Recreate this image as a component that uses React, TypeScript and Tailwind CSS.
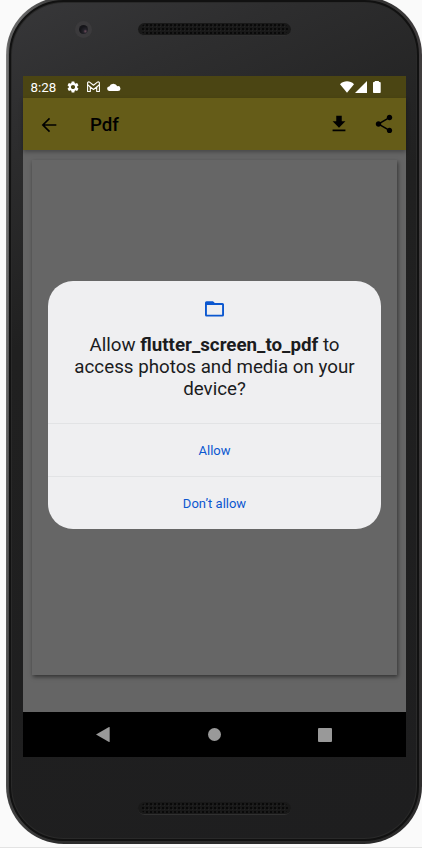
import React from "react";

function Speaker() {
  return (
    <div className="mx-auto flex h-[13px] w-[153px] items-center justify-center rounded-full border-b border-[#303030] bg-[#191919]">
      <svg width="147" height="10" viewBox="0 0 147 10">
        <defs>
          <pattern id="mesh" width="4" height="4" patternUnits="userSpaceOnUse">
            <rect width="2" height="2" x="1" y="0" fill="#090909" />
            <rect width="1" height="1" x="3" y="2" fill="#232323" />
          </pattern>
        </defs>
        <rect width="147" height="10" rx="5" fill="url(#mesh)" />
      </svg>
    </div>
  );
}

function StatusBar() {
  return (
    <div className="flex h-[22px] shrink-0 items-center bg-[#4b4513] pl-[7.500px] pr-[25px] text-white">
      <span className="w-[36px] pt-px text-[13.300px] leading-[22px]">8:28</span>
      <svg className="-ml-px h-[14px] w-[14px]" viewBox="0 0 24 24" fill="currentColor">
        <path d="M19.14 12.94c.04-.3.06-.61.06-.94 0-.32-.02-.64-.07-.94l2.03-1.58a.49.49 0 0 0 .12-.61l-1.92-3.32a.488.488 0 0 0-.59-.22l-2.39.96c-.5-.38-1.03-.7-1.62-.94l-.36-2.54a.484.484 0 0 0-.48-.41h-3.84c-.24 0-.43.17-.47.41l-.36 2.54c-.59.24-1.13.57-1.62.94l-2.39-.96c-.22-.08-.47 0-.59.22L2.74 8.87c-.12.21-.08.47.12.61l2.03 1.58c-.05.3-.09.63-.09.94s.02.64.07.94l-2.03 1.58a.49.49 0 0 0-.12.61l1.92 3.32c.12.22.37.29.59.22l2.39-.96c.5.38 1.03.7 1.62.94l.36 2.54c.05.24.24.41.48.41h3.84c.24 0 .44-.17.47-.41l.36-2.54c.59-.24 1.13-.56 1.62-.94l2.39.96c.22.08.47 0 .59-.22l1.92-3.32c.12-.22.07-.47-.12-.61l-2.01-1.58zM12 15.6c-1.98 0-3.6-1.62-3.6-3.6s1.62-3.6 3.6-3.6 3.6 1.62 3.6 3.6-1.62 3.6-3.6 3.6z" />
      </svg>
      <svg
        className="ml-[7.500px] h-[12px] w-[13px]"
        viewBox="0 0 13 12"
        fill="none"
        stroke="currentColor"
        strokeWidth="1.1"
        strokeLinejoin="round"
      >
        <path d="M.6 2v8.500h2.700V6L6.500 8.500 9.700 6v4.500h2.700V2c0-1-1.200-1.500-2-.9L6.500 4.200 2.600 1.100C1.800.5.6 1 .6 2z" />
        <path d="M.6 3.800 3.300 6M12.400 3.800 9.700 6" />
      </svg>
      <svg className="ml-[7px] h-[8px] w-[14px]" viewBox="0 0 14 8" fill="currentColor">
        <path d="M2.600 8a2.300 2.300 0 0 1-.3-4.600 4.300 4.300 0 0 1 8-.1A2.400 2.400 0 1 1 11 8z" />
      </svg>
      <span className="flex-1" />
      <svg className="h-[12px] w-[14px]" viewBox="0 0 14 12" fill="currentColor">
        <path d="M7 11.800 0 3.200C4-.6 10-.6 14 3.200z" />
      </svg>
      <svg className="ml-px h-[12px] w-[12px]" viewBox="0 0 12 12" fill="currentColor">
        <path d="M0 12 12 0v12z" />
      </svg>
      <svg className="ml-[6px] h-[12px] w-[8px]" viewBox="0 0 8 12" fill="currentColor">
        <path d="M.7 1h1V0h4.200v1h1q.8 0 .8.800v9.400q0 .8-.8.800H.7q-.7 0-.7-.8V1.800Q0 1 .7 1z" />
      </svg>
    </div>
  );
}

function AppBar() {
  return (
    <header className="relative flex h-[52px] shrink-0 items-center bg-[#655c18] pl-[15px] pr-[11px] text-black shadow-[0_2px_4px_rgba(0,0,0,0.3)]">
      <svg className="mt-px h-[22px] w-[22px]" viewBox="0 0 24 24" fill="currentColor">
        <path d="M20 11.200H7.400l5.800-5.800L12 4.200l-8 7.800 8 7.800 1.200-1.200-5.800-5.800H20v-1.600z" />
      </svg>
      <h1 className="ml-[30px] flex-1 pt-[2px] text-[18.700px] font-medium leading-[22px]">Pdf</h1>
      <svg className="h-[22px] w-[22px]" viewBox="0 0 24 24" fill="currentColor">
        <path d="M19 9h-4V3H9v6H5l7 7 7-7zM5 18v2h14v-2H5z" />
      </svg>
      <svg className="ml-[23px] h-[22px] w-[22px]" viewBox="0 0 24 24" fill="currentColor">
        <path d="M18 16.080c-.76 0-1.440.3-1.960.77L8.910 12.700c.05-.23.09-.46.09-.7s-.04-.47-.09-.7l7.050-4.110c.54.5 1.250.81 2.040.81 1.660 0 3-1.340 3-3s-1.340-3-3-3-3 1.340-3 3c0 .24.04.47.09.7L8.040 9.810C7.500 9.310 6.790 9 6 9c-1.660 0-3 1.340-3 3s1.340 3 3 3c.79 0 1.500-.31 2.040-.81l7.120 4.160c-.05.21-.08.43-.08.65 0 1.610 1.310 2.920 2.920 2.920s2.920-1.310 2.920-2.920-1.310-2.920-2.920-2.920z" />
      </svg>
    </header>
  );
}

function PermissionDialog() {
  return (
    <section
      role="dialog"
      className="absolute left-[25px] top-[205px] flex h-[248px] w-[333px] flex-col overflow-hidden rounded-[25px] bg-[#efeff1] text-center"
    >
      <div className="flex h-[142px] flex-col items-center">
        <svg className="mt-[20px] h-[16px] w-[19px] shrink-0 text-[#0b57d0]" viewBox="0 0 19 16" fill="currentColor">
          <path
            fillRule="evenodd"
            d="M1.500.3H8L9.800 2h7.700Q19 2 19 3.500v10.600q0 1.500-1.500 1.500h-16Q0 15.600 0 14.100V1.800Q0 .3 1.500.3zM1.900 3.900v9.900h15.200V3.900z"
          />
        </svg>
        <p className="mt-[17px] whitespace-nowrap text-[18.750px] leading-[22px] text-[#1b1c1e]">
          Allow <b className="font-bold">flutter_screen_to_pdf</b> to
          <br />
          access photos and media on your
          <br />
          device?
        </p>
      </div>
      <button className="h-[53px] border-t border-[#e2e3e5] pt-[2px] text-[13px] text-[#0b57d0]">Allow</button>
      <button className="h-[53px] border-t border-[#e2e3e5] pt-[2px] text-[13px] text-[#0b57d0]">Don’t allow</button>
    </section>
  );
}

function NavigationBar() {
  return (
    <nav className="flex h-[45px] shrink-0 items-center bg-black pl-[73px] pr-[74px] text-[#999999]">
      <svg className="h-[16px] w-[14px]" viewBox="0 0 14 16" fill="currentColor">
        <path d="M0 7.500 13 0q.7 0 .7.600v13.800q0 .6-.7.600z" />
      </svg>
      <span className="ml-[98px] h-[13px] w-[13px] rounded-full bg-[#999999]" />
      <span className="ml-auto h-[14px] w-[14px] rounded-[1px] bg-[#999999]" />
    </nav>
  );
}

export default function App() {
  return (
    <main
      className="h-[848px] w-[422px] overflow-hidden border-b border-[#e3e3e3] bg-[#fafafa]"
      style={{ fontFamily: 'Roboto, "Liberation Sans", sans-serif' }}
    >
      <div className="-mt-[3px] ml-[6px] h-[847px] w-[416px] rounded-[58px] bg-[linear-gradient(180deg,transparent_20%,rgba(34,34,34,0.6)_100%),linear-gradient(90deg,#858585_0px,#5c5c5c_3px,#6a6a6a_14px,#3a3a3a_50px,#343333_380px,#403d3e_416px)] p-[3px]">
        <div className="h-full rounded-[55px] border-[2px] border-[#111111] bg-[#292929] p-[1px]">
          <div className="h-full rounded-[52px] bg-[linear-gradient(155deg,#373739_0%,#2e2e2f_12%,#202020_34%,#1e1e1f_100%)] pl-[11px] pr-[10px]">
            <div className="relative h-[73px] pt-[20px]">
              <span className="absolute left-[52px] top-[18px] flex h-[17px] w-[17px] items-center justify-center rounded-full bg-[#3b3a3c]">
                <i className="h-[9px] w-[9px] rounded-full bg-[radial-gradient(circle_at_70%_70%,#6b4d5b_0px,#25232b_2px,#151519_5px)]" />
              </span>
              <Speaker />
            </div>
            <div className="relative flex h-[681px] w-[383px] flex-col bg-[#656565]">
              <StatusBar />
              <AppBar />
              <div className="flex-1 pl-[9px] pt-[10px]">
                <div className="h-[515px] w-[365px] bg-[#666666] shadow-[1px_2px_4px_rgba(0,0,0,0.5)]" />
              </div>
              <NavigationBar />
              <PermissionDialog />
            </div>
            <div className="pt-[45px]">
              <Speaker />
            </div>
          </div>
        </div>
      </div>
    </main>
  );
}
